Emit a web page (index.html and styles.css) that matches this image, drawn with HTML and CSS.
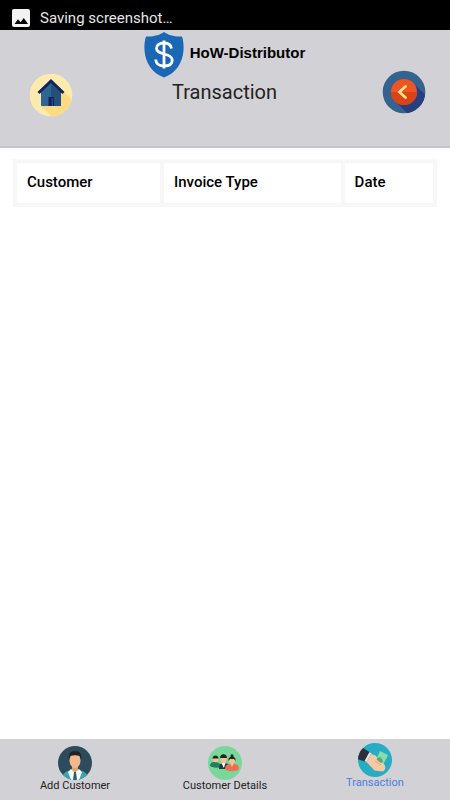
FILE: index.html
```html
<!DOCTYPE html>
<html lang="en">
<head>
<meta charset="utf-8">
<meta name="viewport" content="width=device-width, initial-scale=1">
<title>HoW-Distributor</title>
<link rel="stylesheet" href="styles.css">
</head>
<body>
<div class="status">
  <svg class="status-icon" viewBox="0 0 18 18" aria-hidden="true"><rect width="18" height="18" rx="2" fill="#f2f2f2"/><path d="M2.500 15L6 10.200l2.600 3 3.200-4.200 4.200 6z" fill="#000"/></svg>
  <span>Saving screenshot…</span>
</div>
<header class="header">
  <button class="round home" aria-label="Home">
    <svg viewBox="0 0 44 44"><defs><clipPath id="hc"><circle cx="22" cy="22" r="21.300"/></clipPath></defs><g clip-path="url(#hc)"><path fill="#fdebae" d="M0 0h44v44H0z"/><path fill="#fbdc83" d="M35 19l12 12v16H26L12 33z"/></g><path fill="#2f6594" d="M12 19L22 9l10 10v14H12z"/><path fill="#245079" d="M22 9l10 10v14H22z"/><path fill="none" stroke="#10225c" stroke-width="3" d="M9.500 20L22 8l12.500 12"/><path fill="#10225c" d="M19.500 24h5.500v9h-5.500z"/><path fill="#2a4678" d="M22.500 25h1.500v8h-1.500z"/></svg>
  </button>
  <div class="center">
    <div class="brand">
      <svg class="shield" viewBox="0 0 40 46" aria-hidden="true"><path fill="#1967b5" d="M20 0c4 3 11 5 18 4.500 1 3 2 8 1.500 14C38.500 31 32 41 20 45.500 8 41 1.500 31 .5 18.500 0 12.500 1 7.500 2 4.500 9 5 16 3 20 0z"/><path fill="none" stroke="#fff" stroke-width="2.800" d="M27.500 16.500c-.5-4-3.500-5.500-7.500-5.500-4.500 0-7.500 2-7.500 5.300 0 3.700 3.500 4.700 7.700 5.700 4.500 1 8 2.200 8 6.200 0 3.800-3.400 5.800-8.200 5.800s-8-2.200-8.300-6.500M20 8.500v28"/></svg>
      <span class="name">HoW-Distributor</span>
    </div>
    <h1 class="title">Transaction</h1>
  </div>
  <button class="round" aria-label="Back">
    <svg viewBox="0 0 44 44"><defs><clipPath id="bc"><circle cx="22" cy="22" r="21.300"/></clipPath></defs><g clip-path="url(#bc)"><path fill="#34638f" d="M0 0h44v44H0z"/><path fill="#293e7e" d="M31 13l16 15v19H29L13 31z"/></g><circle cx="22" cy="22" r="13" fill="#f05423"/><path fill="#d94315" d="M9 22a13 13 0 0 0 26 0z"/><path fill="none" stroke="#fbdf86" stroke-width="2.800" stroke-linecap="round" d="M23.500 16.500L17.500 22l6 5.500"/></svg>
  </button>
</header>
<main class="main">
  <table class="table">
    <thead><tr><th class="c1" scope="col">Customer</th><th class="c2" scope="col">Invoice Type</th><th scope="col">Date</th></tr></thead>
  </table>
</main>
<nav class="tabs">
  <a class="tab" href="#add">
    <svg viewBox="0 0 34 34" aria-hidden="true"><defs><clipPath id="tc"><circle cx="17" cy="17" r="17"/></clipPath></defs><g clip-path="url(#tc)"><path fill="#2d4b5d" d="M0 0h34v34H0z"/><path fill="#39a5ac" d="M4 34c0-6 2-8 9-10h8c7 2 9 4 9 10z"/><path fill="#fff" d="M13 23l4 3 4-3 3 3-3 8h-8l-3-8z"/><path fill="#e3a276" d="M14 19h6v5l-3 3-3-3z"/><path fill="#286173" d="M16 26h2l1 8h-4z"/></g><ellipse cx="17" cy="14.500" rx="5.500" ry="7.500" fill="#f3b98c"/><path fill="#222" d="M11 14c-1-6 1-9 6-9s7 3 6 9l-1-4c-3-1-7-1-10 0z"/></svg>
    <span>Add Customer</span>
  </a>
  <a class="tab" href="#details">
    <svg viewBox="0 0 34 34" aria-hidden="true"><circle cx="17" cy="17" r="17" fill="#79d79b"/><path fill="#287b63" d="M2 20c0-3 2-4 5-4s6 2 6 5c-3 1-8 1-11-1z"/><path fill="#29384f" d="M11 23c0-4 1-6 5-6s6 2 6 6z"/><path fill="#fff" d="M13.500 17h4l-1.700 5z"/><path fill="#f26d4f" d="M17 23c0-4 2-5 7-5s7 1 7 5c-3 3-11 3-14 0z"/><circle cx="7.500" cy="13.500" r="2.700" fill="#f6c28d"/><path fill="#222" d="M4.500 12.500c0-4 6-4 6 0z"/><ellipse cx="15.500" cy="13.500" rx="3" ry="3.700" fill="#f6c28d"/><path fill="#222" d="M12 12c0-5 7-5 7 0z"/><path fill="#f6c28d" d="M22 17h4l-2 4z"/><circle cx="24" cy="14.500" r="3" fill="#f6c28d"/><path fill="#222" d="M20.500 15c-1-6 8-6 7 0l-1.500-2h-4z"/><circle cx="24" cy="9.800" r="1.500" fill="#222"/></svg>
    <span>Customer Details</span>
  </a>
  <a class="tab active" href="#transaction" aria-current="page">
    <svg viewBox="0 0 34 34" aria-hidden="true"><defs><clipPath id="mc"><circle cx="17" cy="17" r="17"/></clipPath></defs><g clip-path="url(#mc)"><path fill="#27adc3" d="M0 0h34v34H0z"/><path fill="#2e3039" d="M-1 9l6-4 8 5-5 9-9-3z"/></g><path fill="#e8e8e8" d="M11.500 9l2 1.200-5 8.800-2-1z"/><path fill="#8bdcad" d="M22 8l8 4-5 10-7-5z"/><path fill="#f7c9a3" d="M13.500 11l4 1.500 3 4 5 4c3 3 2 7-1 8l-8-1-8-8.500z"/><path fill="#52a980" d="M18.500 16.500c2-4 6-2 6.500 2.500l-2 1z"/><path stroke="#e0a67c" stroke-width="1" fill="none" d="M17 18l6 4"/></svg>
    <span>Transaction</span>
  </a>
</nav>
</body>
</html>
```
FILE: styles.css
```css
* { box-sizing: border-box; }
body {
  margin: 0;
  min-height: 100vh;
  display: flex;
  flex-direction: column;
  background: #fff;
  color: #222;
  font-family: Roboto, "Liberation Sans", sans-serif;
}
svg { display: block; }
.status {
  height: 30px;
  padding: 6px 12px 0;
  display: flex;
  align-items: center;
  gap: 10px;
  background: #000;
  color: #e6e6e6;
  font-size: 15px;
}
.status-icon { width: 18px; height: 18px; }
.header {
  min-height: 118px;
  display: grid;
  grid-template-columns: 44px 1fr 44px;
  padding: 2px 24px 0 29px;
  background: #d2d1d6;
  border-bottom: 2px solid #c5c5c7;
}
.round {
  width: 44px;
  height: 44px;
  margin-top: 38px;
  padding: 0;
  border: 0;
  background: none;
}
.home { margin-top: 41px; }
.round svg { width: 44px; height: 44px; }
.center {
  display: flex;
  flex-direction: column;
  align-items: center;
  padding-right: 6px;
}
.brand {
  display: flex;
  gap: 6px;
}
.shield { width: 40px; height: 46px; }
.name {
  padding-top: 9px;
  color: #000;
  font: bold 15px/24px "Liberation Sans Narrow", "Liberation Sans", sans-serif;
}
.title {
  margin: 0;
  font-size: 20px;
  font-weight: 400;
  line-height: 28px;
}
.main {
  flex: 1;
  padding: 11px 13px;
}
.table {
  width: 100%;
  table-layout: fixed;
  border-collapse: collapse;
}
.table th {
  height: 44px;
  padding: 0 10px 2px;
  border: 4px solid #f7f7f7;
  color: #000;
  font-size: 15px;
  font-weight: 500;
  text-align: left;
}
.c1 { width: 35%; }
.c2 { width: 43%; }
.tabs {
  height: 61px;
  display: grid;
  grid-template-columns: repeat(3, 1fr);
  background: #d2d1d6;
}
.tab {
  display: flex;
  flex-direction: column;
  align-items: center;
  padding-top: 7px;
  color: #222;
  font-size: 11px;
  line-height: 12px;
  text-decoration: none;
}
.tab svg { width: 34px; height: 34px; }
.active {
  padding-top: 4px;
  color: #4a7fdc;
}
```
